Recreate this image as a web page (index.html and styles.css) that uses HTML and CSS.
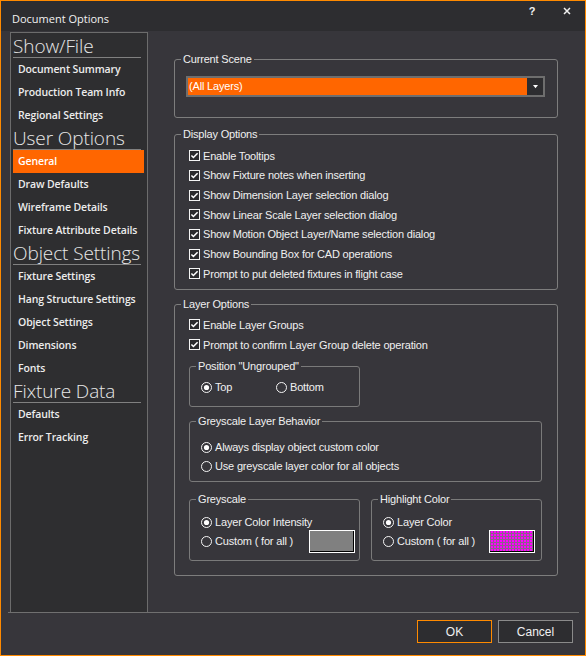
FILE: index.html
```html
<!DOCTYPE html>
<html>
<head>
<meta charset="utf-8">
<link rel="stylesheet" href="styles.css">
</head>
<body>
<div class="window">
  <div class="titlebar">
    <div class="title">Document Options</div>
    <div class="caption-buttons">
      <span class="cap-btn help">?</span>
      <span class="cap-btn close"><svg width="8" height="8" viewBox="0 0 8 8"><path d="M1 1 L7 7 M7 1 L1 7" stroke="#f0f0f0" stroke-width="1.5" fill="none"/></svg></span>
    </div>
  </div>
  <div class="main">
    <nav class="sidebar">
      <div class="nav-head">Show/File</div>
      <div class="nav-item">Document Summary</div>
      <div class="nav-item">Production Team Info</div>
      <div class="nav-item">Regional Settings</div>
      <div class="nav-head">User Options</div>
      <div class="nav-item active">General</div>
      <div class="nav-item">Draw Defaults</div>
      <div class="nav-item">Wireframe Details</div>
      <div class="nav-item">Fixture Attribute Details</div>
      <div class="nav-head">Object Settings</div>
      <div class="nav-item">Fixture Settings</div>
      <div class="nav-item">Hang Structure Settings</div>
      <div class="nav-item">Object Settings</div>
      <div class="nav-item">Dimensions</div>
      <div class="nav-item">Fonts</div>
      <div class="nav-head">Fixture Data</div>
      <div class="nav-item">Defaults</div>
      <div class="nav-item">Error Tracking</div>
    </nav>
    <div class="content">
      <div class="group g-scene">
        <div class="group-title">Current Scene</div>
        <div class="dropdown">
          <span class="dropdown-value">(All Layers)</span>
          <span class="dropdown-btn"><svg width="5" height="4" viewBox="0 0 5 4"><path d="M0 0 H5 L2.5 3.2 Z" fill="#ffffff"/></svg></span>
        </div>
      </div>

      <div class="group g-display">
        <div class="group-title">Display Options</div>
        <div class="rows-display">
          <div class="check-row"><svg class="box" width="11" height="11" viewBox="0 0 11 11"><rect x="0.5" y="0.5" width="10" height="10" fill="#2c2c2f" stroke="#f4f4f4"/><path d="M2.4 5.4 L4.4 7.5 L8.6 3.2" stroke="#fff" stroke-width="1.5" fill="none"/></svg><span>Enable Tooltips</span></div>
          <div class="check-row"><svg class="box" width="11" height="11" viewBox="0 0 11 11"><rect x="0.5" y="0.5" width="10" height="10" fill="#2c2c2f" stroke="#f4f4f4"/><path d="M2.4 5.4 L4.4 7.5 L8.6 3.2" stroke="#fff" stroke-width="1.5" fill="none"/></svg><span>Show Fixture notes when inserting</span></div>
          <div class="check-row"><svg class="box" width="11" height="11" viewBox="0 0 11 11"><rect x="0.5" y="0.5" width="10" height="10" fill="#2c2c2f" stroke="#f4f4f4"/><path d="M2.4 5.4 L4.4 7.5 L8.6 3.2" stroke="#fff" stroke-width="1.5" fill="none"/></svg><span>Show Dimension Layer selection dialog</span></div>
          <div class="check-row"><svg class="box" width="11" height="11" viewBox="0 0 11 11"><rect x="0.5" y="0.5" width="10" height="10" fill="#2c2c2f" stroke="#f4f4f4"/><path d="M2.4 5.4 L4.4 7.5 L8.6 3.2" stroke="#fff" stroke-width="1.5" fill="none"/></svg><span>Show Linear Scale Layer selection dialog</span></div>
          <div class="check-row"><svg class="box" width="11" height="11" viewBox="0 0 11 11"><rect x="0.5" y="0.5" width="10" height="10" fill="#2c2c2f" stroke="#f4f4f4"/><path d="M2.4 5.4 L4.4 7.5 L8.6 3.2" stroke="#fff" stroke-width="1.5" fill="none"/></svg><span>Show Motion Object Layer/Name selection dialog</span></div>
          <div class="check-row"><svg class="box" width="11" height="11" viewBox="0 0 11 11"><rect x="0.5" y="0.5" width="10" height="10" fill="#2c2c2f" stroke="#f4f4f4"/><path d="M2.4 5.4 L4.4 7.5 L8.6 3.2" stroke="#fff" stroke-width="1.5" fill="none"/></svg><span>Show Bounding Box for CAD operations</span></div>
          <div class="check-row"><svg class="box" width="11" height="11" viewBox="0 0 11 11"><rect x="0.5" y="0.5" width="10" height="10" fill="#2c2c2f" stroke="#f4f4f4"/><path d="M2.4 5.4 L4.4 7.5 L8.6 3.2" stroke="#fff" stroke-width="1.5" fill="none"/></svg><span>Prompt to put deleted fixtures in flight case</span></div>
        </div>
      </div>

      <div class="group g-layer">
        <div class="group-title">Layer Options</div>
        <div class="rows-layer">
          <div class="check-row r20"><svg class="box" width="11" height="11" viewBox="0 0 11 11"><rect x="0.5" y="0.5" width="10" height="10" fill="#2c2c2f" stroke="#f4f4f4"/><path d="M2.4 5.4 L4.4 7.5 L8.6 3.2" stroke="#fff" stroke-width="1.5" fill="none"/></svg><span>Enable Layer Groups</span></div>
          <div class="check-row r20"><svg class="box" width="11" height="11" viewBox="0 0 11 11"><rect x="0.5" y="0.5" width="10" height="10" fill="#2c2c2f" stroke="#f4f4f4"/><path d="M2.4 5.4 L4.4 7.5 L8.6 3.2" stroke="#fff" stroke-width="1.5" fill="none"/></svg><span>Prompt to confirm Layer Group delete operation</span></div>
        </div>

        <div class="group sub g-position">
          <div class="group-title">Position "Ungrouped"</div>
          <div class="radio-line">
            <div class="radio-item w75"><svg class="radio" width="11" height="11" viewBox="0 0 11 11"><circle cx="5.5" cy="5.5" r="5" fill="none" stroke="#f4f4f4"/><circle cx="5.5" cy="5.5" r="2.6" fill="#fff"/></svg><span>Top</span></div>
            <div class="radio-item"><svg class="radio" width="11" height="11" viewBox="0 0 11 11"><circle cx="5.5" cy="5.5" r="5" fill="none" stroke="#f4f4f4"/></svg><span>Bottom</span></div>
          </div>
        </div>

        <div class="group sub g-behavior">
          <div class="group-title">Greyscale Layer Behavior</div>
          <div class="rows-behavior">
            <div class="radio-line"><div class="radio-item"><svg class="radio" width="11" height="11" viewBox="0 0 11 11"><circle cx="5.5" cy="5.5" r="5" fill="none" stroke="#f4f4f4"/><circle cx="5.5" cy="5.5" r="2.6" fill="#fff"/></svg><span>Always display object custom color</span></div></div>
            <div class="radio-line"><div class="radio-item"><svg class="radio" width="11" height="11" viewBox="0 0 11 11"><circle cx="5.5" cy="5.5" r="5" fill="none" stroke="#f4f4f4"/></svg><span>Use greyscale layer color for all objects</span></div></div>
          </div>
        </div>

        <div class="color-groups">
          <div class="group sub g-color">
            <div class="group-title">Greyscale</div>
            <div class="rows-color">
              <div class="radio-line"><div class="radio-item"><svg class="radio" width="11" height="11" viewBox="0 0 11 11"><circle cx="5.5" cy="5.5" r="5" fill="none" stroke="#f4f4f4"/><circle cx="5.5" cy="5.5" r="2.6" fill="#fff"/></svg><span>Layer Color Intensity</span></div></div>
              <div class="radio-line"><div class="radio-item"><svg class="radio" width="11" height="11" viewBox="0 0 11 11"><circle cx="5.5" cy="5.5" r="5" fill="none" stroke="#f4f4f4"/></svg><span>Custom ( for all )</span></div><span class="swatch swatch-grey"></span></div>
            </div>
          </div>
          <div class="group sub g-color">
            <div class="group-title">Highlight Color</div>
            <div class="rows-color">
              <div class="radio-line"><div class="radio-item"><svg class="radio" width="11" height="11" viewBox="0 0 11 11"><circle cx="5.5" cy="5.5" r="5" fill="none" stroke="#f4f4f4"/><circle cx="5.5" cy="5.5" r="2.6" fill="#fff"/></svg><span>Layer Color</span></div></div>
              <div class="radio-line"><div class="radio-item"><svg class="radio" width="11" height="11" viewBox="0 0 11 11"><circle cx="5.5" cy="5.5" r="5" fill="none" stroke="#f4f4f4"/></svg><span>Custom ( for all )</span></div><span class="swatch swatch-magenta"></span></div>
            </div>
          </div>
        </div>
      </div>
    </div>
  </div>
  <div class="footer">
    <button class="btn btn-ok">OK</button>
    <button class="btn">Cancel</button>
  </div>
</div>
</body>
</html>
```

FILE: styles.css
```css
html, body {
  margin: 0;
  padding: 0;
  background: #37363b;
}

.window {
  width: 586px;
  height: 656px;
  box-sizing: border-box;
  border: 1px solid #ff8a00;
  background: #37363b;
  color: #f0f0f0;
  display: flex;
  flex-direction: column;
  font-family: "Liberation Sans", Arial, sans-serif;
  font-size: 11px;
}

/* title bar */
.titlebar {
  flex: none;
  height: 30px;
  background: #2d2d30;
  display: flex;
  justify-content: space-between;
}

.title {
  font-family: "Open Sans", "Noto Sans", sans-serif;
  font-size: 11px;
  line-height: 15px;
  padding: 10px 0 0 11px;
  color: #f2f2f2;
}

.caption-buttons {
  display: flex;
  margin-right: 1px;
}

.cap-btn {
  width: 34px;
  height: 22px;
  display: flex;
  align-items: center;
  justify-content: center;
  color: #f2f2f2;
}

.help {
  font-family: "Liberation Sans", Arial, sans-serif;
  font-weight: bold;
  font-size: 11px;
  padding: 0 2px 3px 0;
  box-sizing: border-box;
}

.close {
  padding-bottom: 3px;
  box-sizing: border-box;
}

/* main area */
.main {
  flex: none;
  height: 581px;
  box-sizing: border-box;
  margin: 1px 6px 0 7px;
  border-bottom: 1px solid #707070;
  display: flex;
}

.sidebar {
  flex: none;
  width: 138px;
  margin-left: 2px;
  box-sizing: border-box;
  border: 1px solid #6c6c6c;
  border-bottom: none;
  background: #2e2e30;
  padding: 2px 2px 0 2px;
  font-family: "Open Sans", "Noto Sans", sans-serif;
}

.nav-head {
  height: 22px;
  line-height: 22px;
  font-size: 19px;
  font-weight: 300;
  color: #e8e8e8;
  border-bottom: 1px solid #808080;
  margin-right: 4px;
  white-space: nowrap;
  letter-spacing: -0.1px;
}

.nav-item {
  height: 23px;
  line-height: 23px;
  padding-left: 5px;
  font-size: 10.5px;
  font-weight: 600;
  letter-spacing: -0.12px;
  color: #ececec;
  margin-right: 1px;
  white-space: nowrap;
}

.nav-item.active {
  background: #ff6600;
  color: #ffffff;
}

/* content */
.content {
  flex: 1;
  padding: 27px 21px 0 26px;
  display: flex;
  flex-direction: column;
  letter-spacing: -0.18px;
}

.group {
  --pl: 0px;
  border: 1px solid #7d7d7d;
  border-radius: 3px;
  display: flex;
  flex-direction: column;
  padding-left: var(--pl);
}

.group-title {
  align-self: flex-start;
  margin: -7px 0 0 calc(6px - var(--pl));
  padding: 0 2px;
  line-height: 13px;
  height: 13px;
  background: #37363b;
  white-space: nowrap;
}

.g-scene {
  --pl: 11px;
  padding-right: 12px;
  padding-bottom: 20px;
}

.dropdown {
  margin-top: 10px;
  height: 21px;
  box-sizing: border-box;
  border: 2px solid #6e6e6e;
  display: flex;
}

.dropdown-value {
  flex: 1;
  background: #ff6600;
  color: #ffffff;
  line-height: 17px;
  padding-left: 1px;
}

.dropdown-btn {
  width: 16px;
  background: #2d2d30;
  display: flex;
  align-items: center;
  justify-content: center;
}

.g-display {
  --pl: 14px;
  margin-top: 16px;
  padding-bottom: 5px;
}

.rows-display {
  margin-top: 5px;
}

.check-row {
  height: 19.67px;
  display: flex;
  align-items: center;
  white-space: nowrap;
}

.check-row.r20 {
  height: 20px;
}

.box {
  flex: none;
  margin-right: 3px;
}

.g-layer {
  --pl: 14px;
  margin-top: 14px;
  padding-right: 15px;
  padding-bottom: 14px;
}

.rows-layer {
  margin-top: 4px;
}

.sub {
  border-color: #7a7a7a;
}

.g-position {
  --pl: 11px;
  width: 171px;
  box-sizing: border-box;
  margin-top: 11px;
  padding-bottom: 9px;
}

.g-position .radio-line {
  margin-top: 5px;
}

.radio-line {
  height: 19px;
  display: flex;
  align-items: center;
  white-space: nowrap;
}

.radio-item {
  display: flex;
  align-items: center;
}

.w75 {
  width: 75px;
}

.radio {
  flex: none;
  margin-right: 3px;
}

.g-behavior {
  --pl: 11px;
  margin-top: 14px;
  padding-bottom: 5px;
}

.rows-behavior {
  margin-top: 10px;
}

.color-groups {
  margin-top: 17px;
  display: flex;
  gap: 11px;
}

.g-color {
  --pl: 11px;
  width: 171px;
  box-sizing: border-box;
  padding-right: 4px;
  padding-bottom: 9px;
}

.rows-color {
  margin-top: 7px;
}

.swatch {
  flex: none;
  margin: -2px 0 -2px auto;
  width: 46px;
  height: 23px;
  box-sizing: border-box;
  border: 1px solid #ffffff;
  box-shadow: inset -1px -1px 0 #000000;
}

.swatch-grey {
  background: #808080;
}

.swatch-magenta {
  margin-right: 2px;
  background-color: #ff00ff;
  background-image:
    repeating-linear-gradient(90deg, #8d5f8d 0 1px, transparent 1px 3px),
    repeating-linear-gradient(0deg, #8d5f8d 0 1px, transparent 1px 3px);
}

/* footer */
.footer {
  flex: none;
  display: flex;
  justify-content: flex-end;
  gap: 6px;
  padding: 7px 12px 0 0;
}

.btn {
  width: 75px;
  height: 23px;
  box-sizing: border-box;
  background: #2d2d30;
  border: 1px solid #8a8a8a;
  color: #f0f0f0;
  font-family: "Liberation Sans", Arial, sans-serif;
  font-size: 12px;
  padding: 0;
}

.btn-ok {
  border-color: #ff8a00;
}
```
